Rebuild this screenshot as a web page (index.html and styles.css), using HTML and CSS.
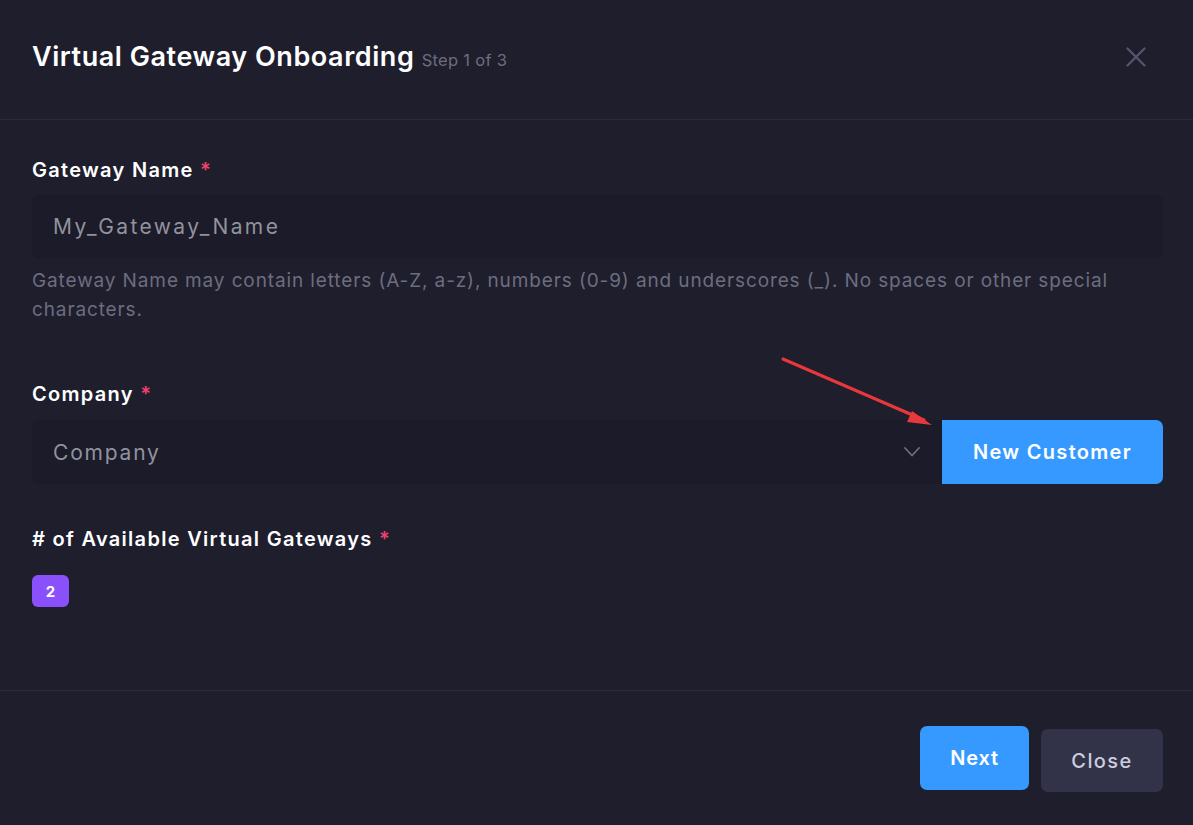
FILE: index.html
```html
<!DOCTYPE html>
<html lang="en">
<head>
<meta charset="utf-8">
<title>Virtual Gateway Onboarding</title>
<link rel="stylesheet" href="styles.css">
</head>
<body>
<div class="modal">
  <header class="modal-header">
    <h1 class="title">Virtual Gateway Onboarding <span class="step">Step 1 of 3</span></h1>
    <button class="close-x" aria-label="Close">
      <svg width="20" height="20" viewBox="0 0 20 20"><path d="M1.5 1.5 L18.5 18.5 M18.5 1.5 L1.5 18.5" stroke="#565674" stroke-width="2.2" stroke-linecap="round" fill="none"/></svg>
    </button>
  </header>
  <main class="modal-body">
    <label class="label">Gateway Name <span class="req">*</span></label>
    <div class="input">My_Gateway_Name</div>
    <p class="help">Gateway Name may contain letters (A-Z, a-z), numbers (0-9) and underscores (_). No spaces or other special characters.</p>

    <label class="label label-company">Company <span class="req">*</span></label>
    <div class="select-row">
      <div class="select">
        <span>Company</span>
        <svg width="16" height="10" viewBox="0 0 16 10"><path d="M1 1 L8 8.5 L15 1" stroke="#6d6d80" stroke-width="1.8" fill="none" stroke-linecap="round" stroke-linejoin="round"/></svg>
      </div>
      <button class="btn-new">New Customer</button>
    </div>

    <label class="label label-count">#&nbsp;of Available Virtual Gateways <span class="req">*</span></label>
    <div class="badge">2</div>
  </main>
  <footer class="modal-footer">
    <button class="btn btn-next">Next</button>
    <button class="btn btn-close">Close</button>
  </footer>
  <svg class="arrow" width="1193" height="825" viewBox="0 0 1193 825">
    <line x1="783" y1="359" x2="924" y2="420" stroke="#e8383b" stroke-width="3" stroke-linecap="round"/>
    <path d="M932 425 L912 411 L907 422 Z" fill="#e8383b"/>
  </svg>
</div>
</body>
</html>
```

FILE: styles.css
```css
* { box-sizing: border-box; }
html, body {
  margin: 0;
  padding: 0;
  background: #1e1e2d;
}
body {
  font-family: "Inter", "Noto Sans", sans-serif;
  color: #ffffff;
  width: 1193px;
  height: 825px;
  overflow: hidden;
}
.modal {
  position: relative;
  width: 1193px;
  height: 825px;
  background: #1e1e2d;
}
.modal-header {
  height: 120px;
  border-bottom: 1px solid #2b2b40;
  display: flex;
  align-items: center;
  justify-content: space-between;
  padding: 0 47px 6px 32px;
}
.title {
  margin: 0;
  font-size: 27px;
  font-weight: 600;
  letter-spacing: 0.55px;
  color: #ffffff;
}
.step {
  font-size: 16.5px;
  font-weight: 400;
  color: #6d6d80;
  letter-spacing: 0.3px;
}
.close-x {
  background: none;
  border: 0;
  padding: 0;
  width: 20px;
  height: 20px;
  display: flex;
}
.modal-body {
  padding: 35px 30px 83px 32px;
  display: flex;
  flex-direction: column;
  align-items: flex-start;
}
.label {
  font-size: 20px;
  font-weight: 600;
  line-height: 30px;
  letter-spacing: 1.3px;
  color: #ffffff;
}
.req { color: #f1416c; }
.input {
  margin-top: 10px;
  width: 100%;
  height: 63px;
  background: #1b1b29;
  border-radius: 7px;
  padding: 0 21px;
  display: flex;
  align-items: center;
  font-size: 21px;
  letter-spacing: 2.4px;
  color: #92929f;
}
.help {
  margin: 8px 0 0;
  font-size: 19px;
  line-height: 29px;
  letter-spacing: 0.88px;
  color: #6d6d80;
}
.label-company { margin-top: 55px; }
.select-row {
  margin-top: 11px;
  width: 100%;
  display: flex;
  height: 64px;
}
.select {
  flex: 1;
  background: #1b1b29;
  border-radius: 7px 0 0 7px;
  display: flex;
  align-items: center;
  justify-content: space-between;
  padding: 0 22px 0 21px;
  font-size: 21px;
  letter-spacing: 1.8px;
  color: #92929f;
}
.btn-new {
  width: 221px;
  background: #3699ff;
  border: 0;
  border-radius: 0 7px 7px 0;
  color: #ffffff;
  font-family: inherit;
  font-size: 20px;
  font-weight: 600;
  letter-spacing: 1.3px;
}
.label-count { margin-top: 40px; }
.badge {
  margin-top: 21px;
  width: 37px;
  height: 32px;
  border-radius: 6px;
  background: #8950fc;
  color: #ffffff;
  font-size: 15px;
  font-weight: 700;
  display: flex;
  align-items: center;
  justify-content: center;
}
.modal-footer {
  border-top: 1px solid #2b2b40;
  display: flex;
  justify-content: flex-end;
  align-items: flex-start;
  gap: 12px;
  padding: 35px 30px 0 0;
}
.btn {
  border: 0;
  border-radius: 7px;
  font-family: inherit;
  font-size: 20px;
  letter-spacing: 0.8px;
}
.btn-next {
  width: 109px;
  height: 64px;
  background: #3699ff;
  color: #ffffff;
  font-weight: 600;
}
.btn-close {
  margin-top: 3px;
  width: 122px;
  height: 63px;
  background: #323248;
  color: #cdcdde;
  font-weight: 500;
  letter-spacing: 1.4px;
}
.arrow {
  position: absolute;
  left: 0;
  top: 0;
  pointer-events: none;
}
```
